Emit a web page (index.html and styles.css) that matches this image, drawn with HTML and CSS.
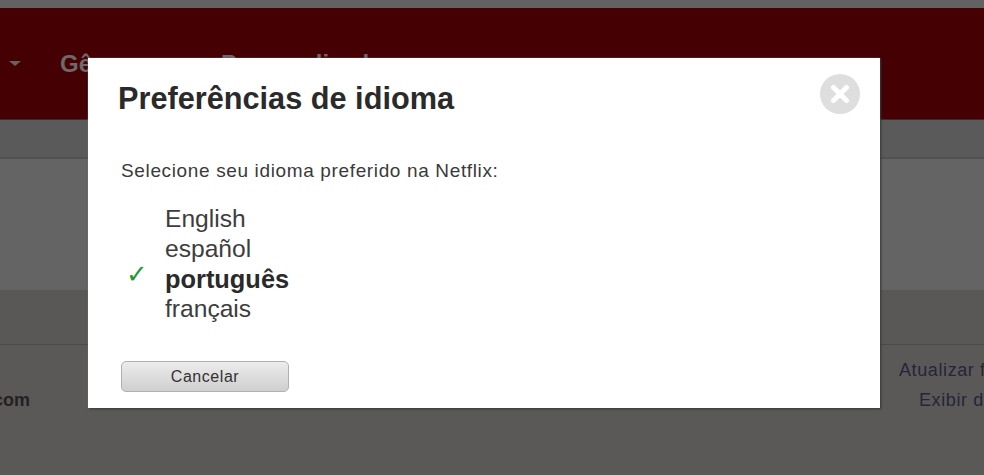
FILE: index.html
```html
<!DOCTYPE html>
<html lang="pt">
  <head>
    <meta charset="UTF-8" />
    <title>Preferências de idioma</title>
    <link rel="stylesheet" href="styles.css">
  </head>

  <body>
    <div class="page">
      <div class="top_strip"></div>
      <div class="nav">
        <span class="nav_arrow"></span>
        <span class="nav_item genres">Gêneros</span>
        <span class="nav_item">Personalizado</span>
      </div>
      <div class="subnav"></div>
      <div class="band"></div>
      <div class="section_head"></div>
      <div class="account">
        <b class="email">com</b>
        <div class="links">
          <a>Atualizar forma</a>
          <a class="second">Exibir detalhes</a>
        </div>
      </div>
    </div>

    <div class="modal">
      <div class="modal_head">
        <h2>Preferências de idioma</h2>
        <div class="close">
          <svg width="20" height="20" viewBox="0 0 20 20">
            <path d="M3.5 3.5l13 13M16.5 3.5l-13 13" stroke="#fff" stroke-width="5" stroke-linecap="round" />
          </svg>
        </div>
      </div>
      <p class="intro">Selecione seu idioma preferido na Netflix:</p>
      <ul class="langs">
        <li>English</li>
        <li>español</li>
        <li class="selected"><span class="check">✓</span>português</li>
        <li>français</li>
      </ul>
      <div class="cancel">Cancelar</div>
    </div>
  </body>
</html>
```

FILE: styles.css
```css
html,
body {
  margin: 0;
  height: 100%;
  overflow: hidden;
  background: #5b5958;
  font-family: "Liberation Sans", Arial, sans-serif;
}

.page {
  display: flex;
  flex-flow: column;
  height: 475px;
  overflow: hidden;
}

.top_strip {
  height: 8px;
  background: #626262;
}

.nav {
  height: 112px;
  background: #450003;
  display: flex;
  align-items: flex-start;
  padding-top: 42px;
  box-sizing: border-box;
  color: #6f6768;
  font-size: 24px;
  font-weight: bold;
  border-bottom: 1px solid #47282a;
}

.nav_arrow {
  margin: 11px 0 0 9px;
  border-top: 5px solid #6a6061;
  border-left: 6px solid transparent;
  border-right: 6px solid transparent;
}

.nav_item.genres {
  margin-left: 39px;
  width: 161px;
}

.subnav {
  height: 37px;
  background: #5a5a5a;
  border-bottom: 2px solid #515151;
}

.band {
  height: 131px;
  background: #646464;
}

.section_head {
  height: 54px;
  background: #5a5857;
  border-bottom: 1px solid #4d4b4a;
}

.account {
  flex: 1;
  position: relative;
  overflow: hidden;
  font-size: 18px;
}

.email {
  position: absolute;
  right: 954px;
  top: 45px;
  color: #222;
}

.links {
  position: absolute;
  left: 899px;
  top: 15px;
  display: flex;
  flex-flow: column;
  align-items: flex-start;
  gap: 9px;
  white-space: nowrap;
  letter-spacing: 0.6px;
  color: #23263a;
}

.links > .second {
  margin-left: 20px;
}

.modal {
  position: absolute;
  left: 88px;
  top: 58px;
  width: 792px;
  height: 350px;
  padding: 0 33px;
  box-sizing: border-box;
  background: #fff;
  box-shadow: 1px 1px 2px #333, 0 0 1px #999;
}

.modal_head {
  display: flex;
  justify-content: space-between;
  align-items: flex-start;
  height: 96px;
  margin-left: -3px;
}

.modal_head h2 {
  margin: 24px 0 0;
  font-size: 30.7px;
  line-height: 34px;
  color: #2a2a2a;
}

.close {
  width: 40px;
  height: 40px;
  margin: 16px -13px 0 0;
  border-radius: 50%;
  background: #dedede;
  display: flex;
  align-items: center;
  justify-content: center;
}

.intro {
  margin: 0;
  font-size: 19px;
  letter-spacing: 0.64px;
  line-height: 34px;
  color: #3a3a3a;
}

.langs {
  list-style: none;
  margin: 16px 0 0;
  padding: 0 0 0 44px;
  font-size: 24.6px;
  line-height: 30px;
  color: #3d3d3d;
}

.selected {
  position: relative;
  font-size: 25.4px;
  font-weight: bold;
  color: #2a2a2a;
}

.check {
  position: absolute;
  left: -39px;
  top: -5px;
  font-weight: normal;
  font-size: 26px;
  color: #1c9a32;
  font-family: "DejaVu Sans", sans-serif;
}

.cancel {
  margin-top: 37px;
  width: 168px;
  height: 31px;
  box-sizing: border-box;
  border: 1px solid #b0b0b0;
  border-radius: 5px;
  background: linear-gradient(#ececec, #cfcfcf);
  text-align: center;
  font-size: 16px;
  letter-spacing: 0.55px;
  line-height: 30px;
  color: #333;
}
```
